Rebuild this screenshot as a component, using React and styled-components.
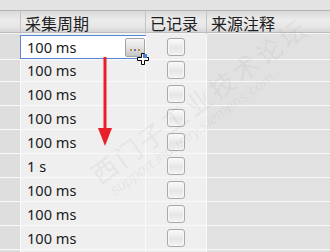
import React from 'react';
import styled, { createGlobalStyle } from 'styled-components';

const Global = createGlobalStyle`
  html, body { margin: 0; padding: 0; background: #e2e2e2; }
  body { width: 330px; height: 252px; overflow: hidden; }
`

const Screen = styled.div`
  position: relative;
  width: 330px;
  height: 252px;
  overflow: hidden;
  background: #e2e2e2;
  font-family: "Noto Sans", "Noto Sans CJK SC", sans-serif;
`

const TopBand = styled.div`
  height: 10px;
  background: #e3e3e3;
  border-bottom: 1px solid #b4b4b4;
`

const HeaderRow = styled.div`
  display: grid;
  grid-template-columns: 21px 125px 61px 1fr;
  height: 21px;
  background: linear-gradient(#dadada, #ececec 45%, #e6e6e6 75%, #d6d6d6);
  border-bottom: 1px solid #bcbcbc;
  box-shadow: 0 1px 0 #f6f6f6;
  margin-bottom: 1px;
`

const HeadCell = styled.div`
  display: flex;
  align-items: center;
  padding-left: 4px;
  border-right: 1px solid #c4c4c4;
  font-family: "Noto Sans CJK SC", sans-serif;
  font-size: 16px;
  color: #1e1e1e;
  white-space: nowrap;
  &:last-child { border-right: none; }
`

const Row = styled.div`
  display: grid;
  grid-template-columns: 21px 125px 61px 1fr;
  height: 24px;
  position: relative;
  z-index: ${(p) => (p.editing ? 2 : 1)};
`

const Cell = styled.div`
  box-sizing: border-box;
  display: flex;
  align-items: center;
  justify-content: ${(p) => (p.center ? 'center' : 'flex-start')};
  padding-left: ${(p) => (p.pad ? '6px' : '0')};
  background: ${(p) => p.bg};
  border-right: 1px solid #f9f9f9;
  border-bottom: 1px solid #f9f9f9;
  font-size: 14.6px;
  color: #1a1a1a;
  overflow: visible;
  &:last-child { border-right: none; }
`

const EditBox = styled.div`
  box-sizing: border-box;
  align-self: flex-start;
  margin: 1px -2px 0 -7px;
  width: calc(100% + 9px);
  height: 24px;
  display: flex;
  align-items: center;
  justify-content: space-between;
  padding: 0 1px 0 6px;
  background: #fff;
  border: 1px solid #5b86d8;
`

const DotsButton = styled.div`
  width: 20px;
  height: 19px;
  box-sizing: border-box;
  border: 1px solid #a3a3a3;
  border-radius: 2px;
  background: linear-gradient(#f6f6f6, #e2e2e2 50%, #c4c4c4);
  display: flex;
  align-items: flex-end;
  justify-content: center;
  padding-bottom: 5px;
  gap: 2px;
`

const Dot = styled.span`
  width: 2px;
  height: 2px;
  background: ${(p) => p.c};
`

const Check = styled.div`
  width: 18px;
  height: 18px;
  box-sizing: border-box;
  border: 1px solid #a9a9a9;
  border-radius: 3px;
  background: linear-gradient(#fbfbfb, #e6e6e6 55%, #f3f3f3);
  box-shadow: inset 0 0 0 1px #f7f7f7;
`

const Overlay = styled.svg`
  position: absolute;
  left: 0;
  top: 0;
  pointer-events: none;
  z-index: 5;
`

const Watermark = styled.div`
  position: absolute;
  left: 82px;
  top: 168px;
  transform: rotate(-36deg);
  transform-origin: left top;
  color: rgba(130, 130, 130, 0.1);
  z-index: 4;
  pointer-events: none;
  line-height: 1.1;
  white-space: nowrap;
`

const WmBig = styled.div`
  font-family: "Noto Sans CJK SC", sans-serif;
  font-size: 26px;
  letter-spacing: 3px;
  margin-left: 4px;
`

const WmSmall = styled.div`
  font-family: "Liberation Sans", sans-serif;
  font-size: 15px;
  font-style: italic;
  margin-left: 10px;
`

const rows = ['100 ms', '100 ms', '100 ms', '100 ms', '100 ms', '1 s', '100 ms', '100 ms', '100 ms', '']

export default function App() {
  return (
    <Screen>
      <Global />
      <TopBand />
      <HeaderRow>
        <HeadCell />
        <HeadCell>采集周期</HeadCell>
        <HeadCell>已记录</HeadCell>
        <HeadCell>来源注释</HeadCell>
      </HeaderRow>
      {rows.map((r, i) => (
        <Row key={i} editing={i === 0}>
          <Cell bg="#dedede" />
          <Cell bg="#efefef" pad>
            {i === 0 ? (
              <EditBox>
                <span>{r}</span>
                <DotsButton>
                  <Dot c="#c98a3a" />
                  <Dot c="#7a6fb0" />
                  <Dot c="#c98a3a" />
                </DotsButton>
              </EditBox>
            ) : r}
          </Cell>
          <Cell bg="#efefef" center>
            <Check />
          </Cell>
          <Cell bg="#e1e1e1" />
        </Row>
      ))}
      <Watermark>
        <WmBig>西门子工业技术论坛</WmBig>
        <WmSmall>support.industry.siemens.com</WmSmall>
      </Watermark>
      <Overlay width="330" height="252">
        <line x1="105" y1="57" x2="105" y2="130" stroke="#e8202a" strokeWidth="3" />
        <polygon points="98,128 112,128 105,146" fill="#e8202a" />
        <g transform="translate(137,53)">
          <path d="M4.5 0.5 h3 v4 h4 v3 h-4 v4 h-3 v-4 h-4 v-3 h4 z" fill="#fff" stroke="#000" strokeWidth="1" />
          <rect x="6" y="1" width="4" height="4" fill="#4a7fd6" />
        </g>
      </Overlay>
    </Screen>
  );
}
